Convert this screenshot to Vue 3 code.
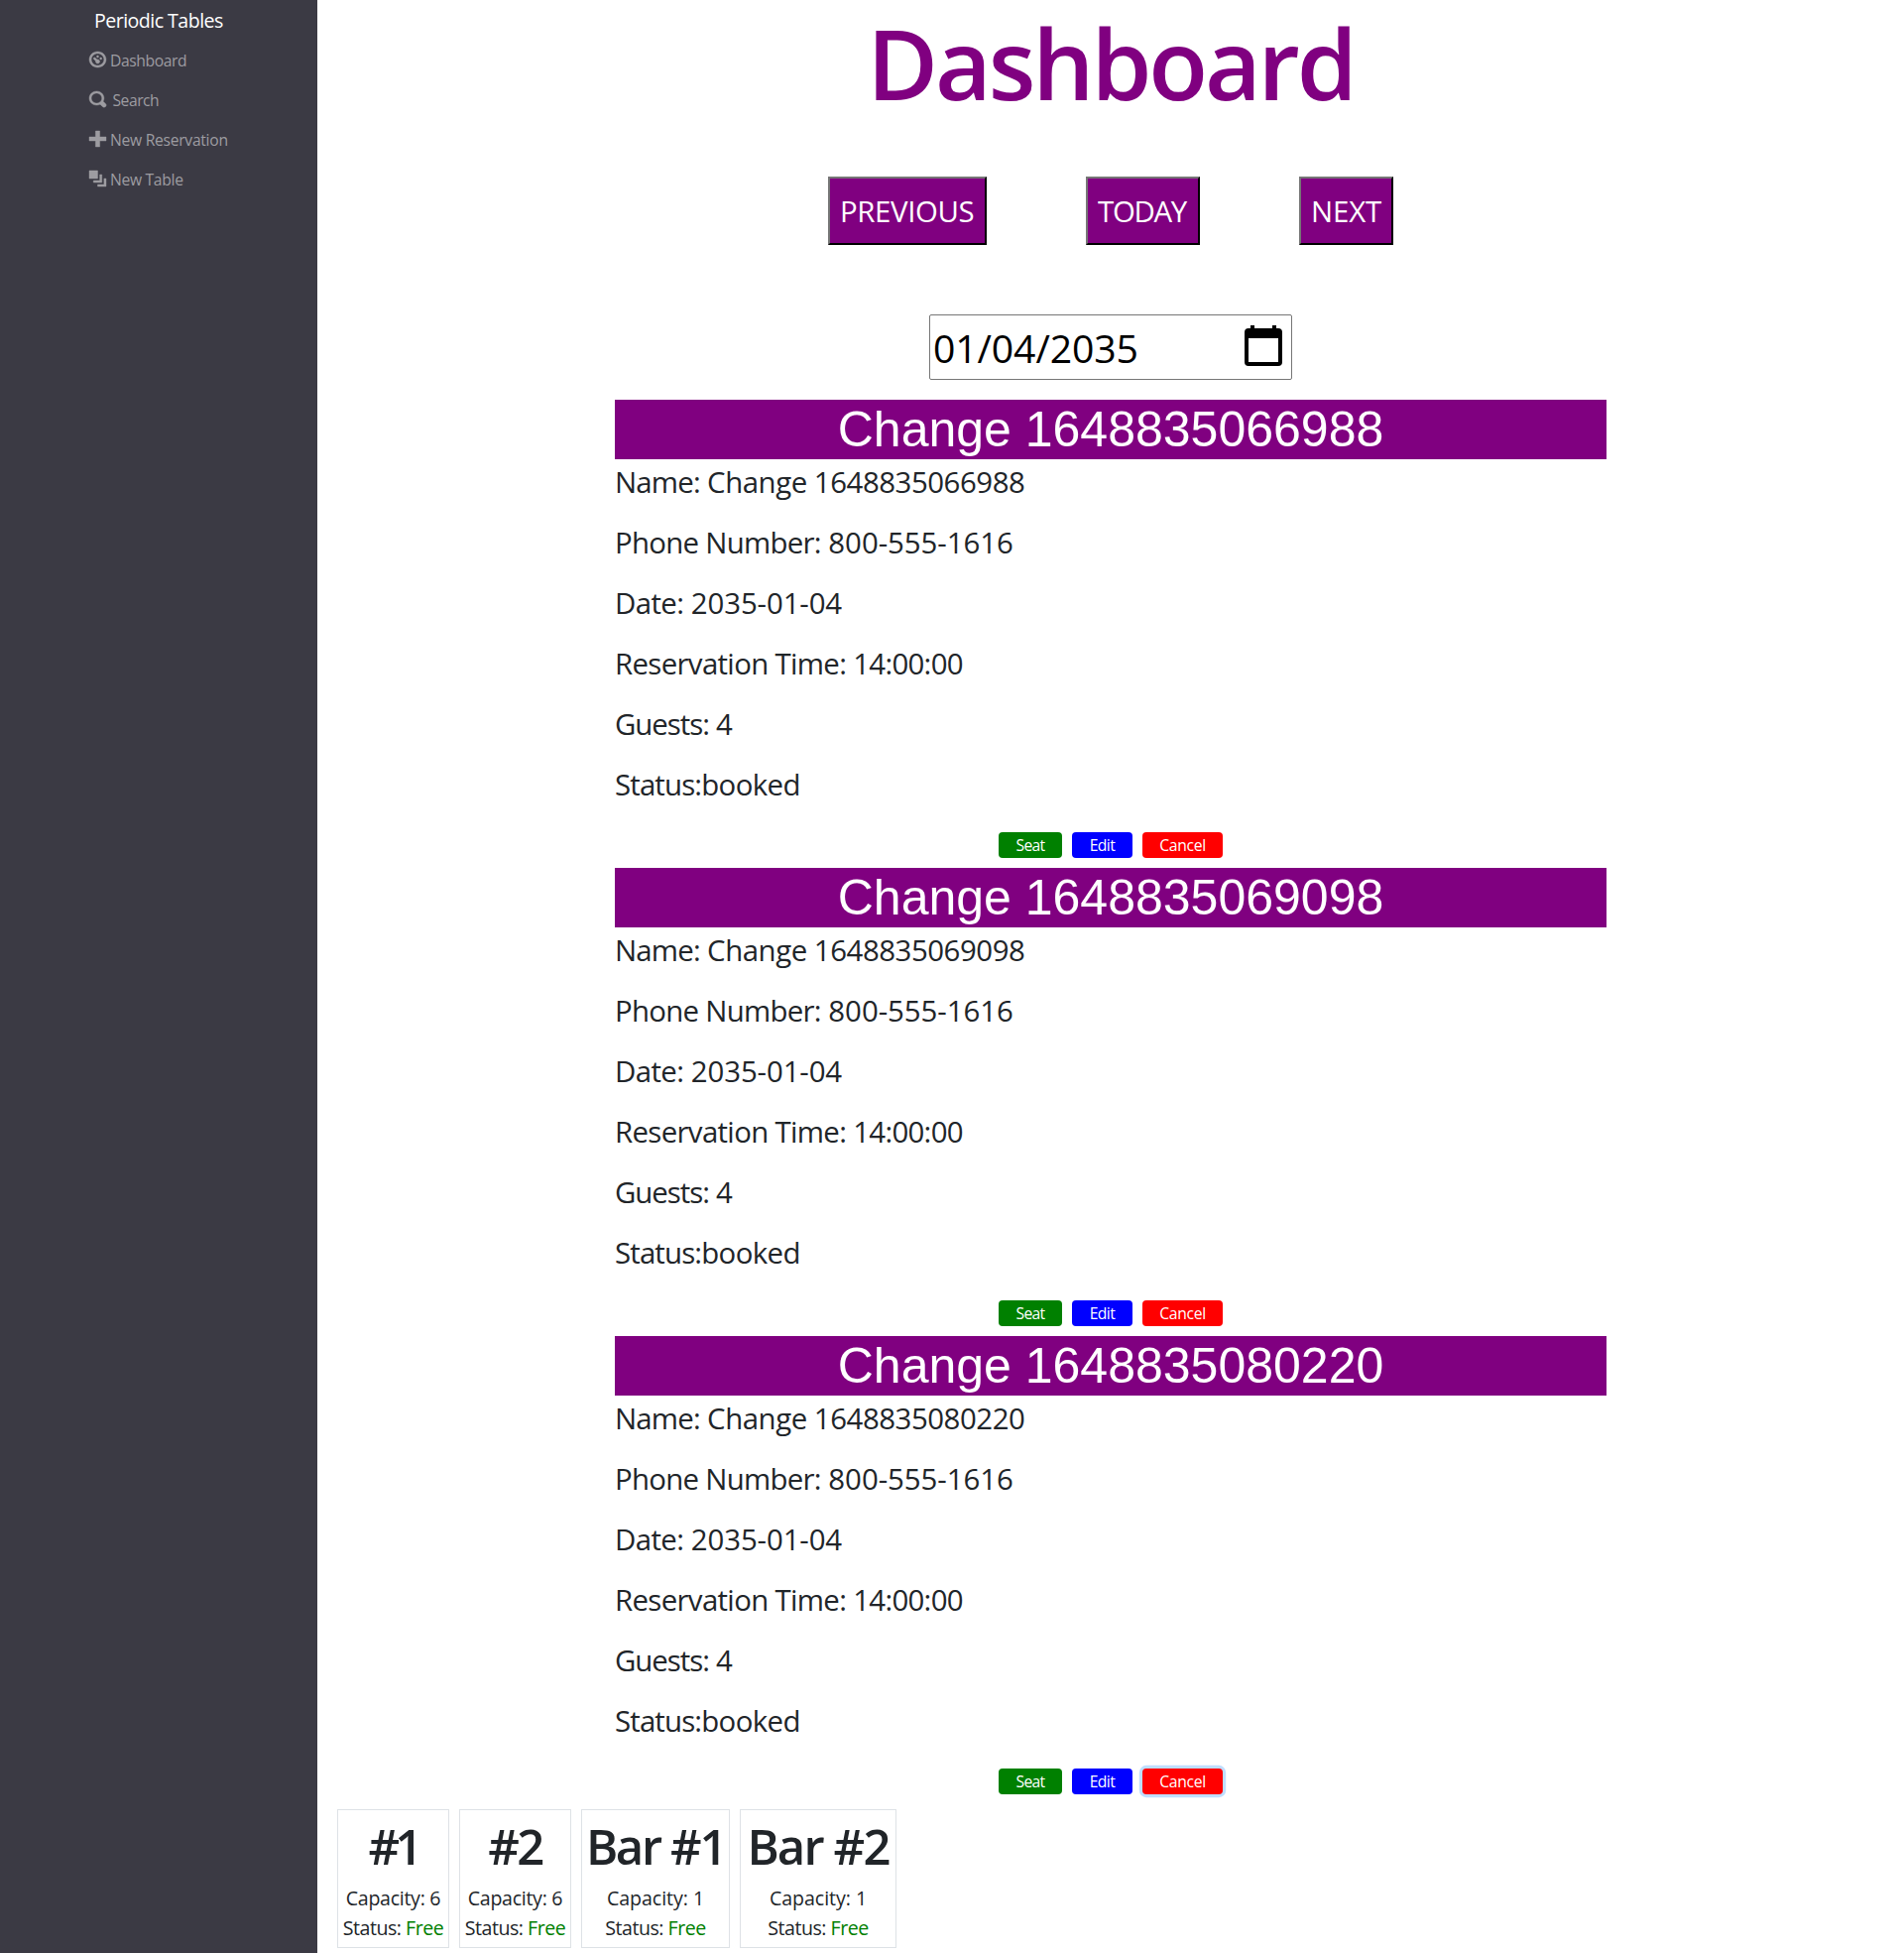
<script setup>
const nav = [
  { label: 'Dashboard', ls: -0.43, gap: 4, d: 'M4 0c-2.2 0-4 1.8-4 4s1.8 4 4 4 4-1.8 4-4-1.8-4-4-4zm0 1c1.66 0 3 1.34 3 3s-1.34 3-3 3-3-1.34-3-3 1.34-3 3-3zm0 1c-.28 0-.5.22-.5.5s.22.5.5.5.5-.22.5-.5-.22-.5-.5-.5zm-1.66 1a.5.5 0 0 0-.19.84l.91.91c-.02.08-.06.16-.06.25 0 .55.45 1 1 1s1-.45 1-1-.45-1-1-1c-.09 0-.17.04-.25.06l-.91-.91a.5.5 0 0 0-.44-.16.5.5 0 0 0-.06 0zm3.16 0c-.28 0-.5.22-.5.5s.22.5.5.5.5-.22.5-.5-.22-.5-.5-.5z' },
  { label: 'Search', ls: -0.5, gap: 6.5, d: 'M3.5 0c-1.93 0-3.5 1.57-3.5 3.5s1.57 3.5 3.5 3.5c.59 0 1.17-.14 1.66-.41a1 1 0 0 0 .13.13l1 1a1.02 1.02 0 1 0 1.44-1.44l-1-1a1 1 0 0 0-.16-.13c.27-.49.44-1.06.44-1.66 0-1.93-1.55-3.5-3.5-3.5zm0 1c1.39 0 2.5 1.11 2.5 2.5 0 .66-.24 1.27-.66 1.72-.01.01-.02.02-.03.03a1 1 0 0 0-.13.13c-.44.4-1.04.63-1.69.63-1.39 0-2.5-1.11-2.5-2.5s1.11-2.5 2.5-2.5z' },
  { label: 'New Reservation', ls: -0.3, gap: 4, d: 'M3 0v3h-3v2h3v3h2v-3h3v-2h-3v-3h-2z' },
  { label: 'New Table', ls: -0.33, gap: 4, d: 'M0 0v4h4v-4h-4zm5 2v3h-3v1h4v-4h-1zm2 2v3h-3v1h4v-4h-1z' },
]

const dayButtons = [
  { label: 'PREVIOUS', width: 160, ls: -0.38 },
  { label: 'TODAY', width: 115, ls: -1.3 },
  { label: 'NEXT', width: 95, ls: -0.15 },
]

const reservations = ['Change 1648835066988', 'Change 1648835069098', 'Change 1648835080220'].map((name) => ({
  name,
  lines: [
    { label: 'Name:', value: ` ${name}`, ls: -0.8, vls: -0.46 },
    { label: 'Phone Number:', value: ' 800-555-1616', ls: -0.72, vls: -0.05 },
    { label: 'Date:', value: ' 2035-01-04', ls: -0.6, vls: -0.12 },
    { label: 'Reservation Time:', value: ' 14:00:00', ls: -0.66, vls: -0.7 },
    { label: 'Guests:', value: ' 4', ls: -1.03, vls: -0.6 },
    { label: 'Status:', value: 'booked', ls: -0.85, vls: -0.6 },
  ],
}))

const tables = [
  { name: '#1', capacity: 6, width: 113, ls: -4.9, cls: -0.3 },
  { name: '#2', capacity: 6, width: 113, ls: -2.6, cls: -0.3 },
  { name: 'Bar #1', capacity: 1, width: 150, ls: -2.35, cls: -0.05 },
  { name: 'Bar #2', capacity: 1, width: 158, ls: -1.85, cls: -0.05 },
]
</script>

<template>
  <div class="app">
    <aside class="sidebar">
      <div class="brand">Periodic Tables</div>
      <a v-for="item in nav" :key="item.label" class="nav-link">
        <svg width="17" height="16" viewBox="0 0 8 8" preserveAspectRatio="none"><path :d="item.d" /></svg>
        <span :style="{ letterSpacing: item.ls + 'px', marginLeft: item.gap + 'px' }">{{ item.label }}</span>
      </a>
    </aside>

    <main class="content">
      <h1>Dashboard</h1>
      <div class="days">
        <button
          v-for="b in dayButtons"
          :key="b.label"
          :style="{ width: b.width + 'px', letterSpacing: b.ls + 'px' }"
        >{{ b.label }}</button>
      </div>
      <div class="date-input">
        <span>01/04/2035</span>
        <svg width="38" height="41" viewBox="0 0 38 41">
          <path fill-rule="evenodd" d="M6 0h4v3h18v-3h4v3h2a4 4 0 0 1 4 4v30a4 4 0 0 1-4 4h-30a4 4 0 0 1-4-4v-30a4 4 0 0 1 4-4h2zM4 13v24h30v-24z" />
        </svg>
      </div>

      <section v-for="(r, i) in reservations" :key="r.name" class="reservation">
        <h2>{{ r.name }}</h2>
        <div class="details">
          <p v-for="l in r.lines" :key="l.label"><span :style="{ letterSpacing: l.ls + 'px' }">{{ l.label }}</span><span :style="{ letterSpacing: l.vls + 'px' }">{{ l.value }}</span></p>
        </div>
        <div class="actions">
          <button class="seat">Seat</button>
          <button class="edit">Edit</button>
          <button class="cancel" :class="{ focused: i === 2 }">Cancel</button>
        </div>
      </section>

      <div class="tables">
        <div v-for="t in tables" :key="t.name" class="table-card" :style="{ width: t.width + 'px' }">
          <h3 :style="{ letterSpacing: t.ls + 'px' }">{{ t.name }}</h3>
          <div :style="{ letterSpacing: t.cls + 'px' }">Capacity: {{ t.capacity }}</div>
          <div class="status">Status: <span>Free</span></div>
        </div>
      </div>
    </main>
  </div>
</template>

<style>
body {
  margin: 0;
  background: #fff;
}
</style>

<style scoped>
.app {
  display: flex;
  height: 1969px;
  font-family: "Open Sans", "Noto Sans", sans-serif;
  color: #212529;
}
.app * {
  box-sizing: border-box;
}
.sidebar {
  width: 320px;
  flex: none;
  background: #3b3a44;
}
.brand {
  height: 40px;
  padding: 6px 0 0 95px;
  font-size: 19.6px;
  line-height: 30px;
  letter-spacing: -0.54px;
  color: #fff;
}
.nav-link {
  display: flex;
  align-items: center;
  height: 40px;
  padding-left: 90px;
  font-size: 15.7px;
  line-height: 24px;
  color: #9d9ca1;
}
.nav-link svg {
  overflow: visible;
  fill: currentColor;
  stroke: currentColor;
  stroke-width: 0.2;
}
.nav-link span {
  padding-top: 2px;
}
.content {
  flex: 1;
  display: flex;
  flex-direction: column;
  align-items: center;
}
h1 {
  margin: 3px 0 0;
  font-size: 98px;
  line-height: 120px;
  font-weight: 600;
  letter-spacing: -3.15px;
  color: purple;
}
.days {
  display: flex;
  gap: 100px;
  margin-top: 55px;
}
.days button {
  height: 69px;
  padding: 2px 0 0 10px;
  border: 2px outset #767676;
  border-color: #767676 #212121 #212121 #767676;
  background: purple;
  color: #fff;
  font-family: inherit;
  font-size: 29.4px;
  line-height: 45px;
  text-align: left;
  white-space: nowrap;
}
.date-input {
  display: flex;
  align-items: center;
  justify-content: space-between;
  width: 366px;
  height: 66px;
  margin-top: 70px;
  padding: 0 9px 0 3px;
  border: 1px solid #767676;
  border-radius: 2px;
  font-size: 39.2px;
  letter-spacing: -0.12px;
  color: #000;
}
.date-input svg {
  margin-bottom: 3px;
}
.reservation {
  width: 1000px;
  height: 452px;
  margin-top: 20px;
}
h2 {
  height: 60px;
  margin: 0;
  background: purple;
  color: #fff;
  font: 400 50px/60px "Liberation Sans", Arial, sans-serif;
  text-align: center;
}
.details {
  padding-top: 1px;
}
p {
  margin: 0 0 16px;
  font-size: 29.4px;
  line-height: 45px;
  white-space: pre;
}
.actions {
  display: flex;
  justify-content: center;
  gap: 10px;
  padding-top: 9px;
}
.actions button {
  height: 26px;
  padding: 0;
  border: 0;
  border-radius: 4px;
  color: #fff;
  font-family: inherit;
  font-size: 15.7px;
  line-height: 26px;
}
.seat {
  width: 64px;
  background: green;
  letter-spacing: -0.7px;
}
.edit {
  width: 61px;
  background: blue;
  letter-spacing: -0.58px;
}
.cancel {
  width: 81px;
  background: red;
  letter-spacing: -0.3px;
}
.cancel.focused {
  box-shadow: 0 0 0 3.2px rgba(0, 123, 255, 0.25);
}
.tables {
  display: flex;
  gap: 10px;
  align-self: flex-start;
  margin: 25px 0 0 20px;
}
.table-card {
  height: 140px;
  padding-top: 6px;
  border: 1px solid #dee2e6;
  font-size: 19.6px;
  line-height: 30px;
  text-align: center;
  white-space: nowrap;
}
.table-card h3 {
  margin: 0 0 8px;
  font-size: 49px;
  line-height: 60px;
  font-weight: 600;
}
.status {
  letter-spacing: -0.48px;
}
.status span {
  color: green;
}
</style>
